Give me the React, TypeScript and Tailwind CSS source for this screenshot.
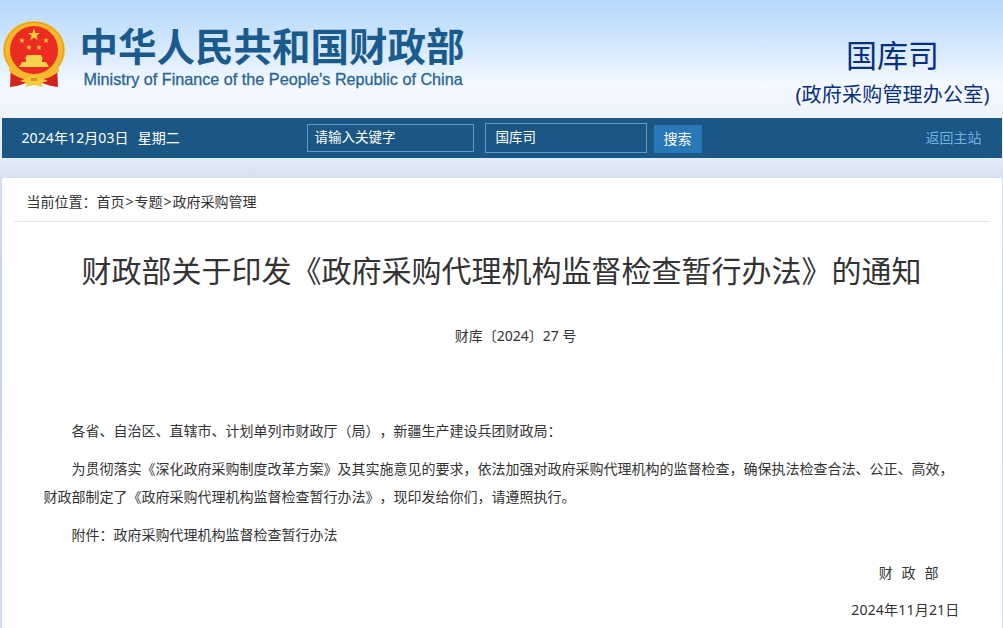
const FONT = "font-['Noto_Sans','Noto_Sans_CJK_SC',sans-serif]";

function Star({ x, y, r }: { x: number; y: number; r: number }) {
  const points = Array.from({ length: 10 }, (_, i) => {
    const a = (Math.PI / 5) * i - Math.PI / 2;
    const d = i % 2 === 0 ? r : r * 0.4;
    return `${(x + d * Math.cos(a)).toFixed(2)},${(y + d * Math.sin(a)).toFixed(2)}`;
  }).join(" ");
  return <polygon points={points} fill="#f8cf3a" />;
}

function Emblem() {
  return (
    <svg width="64" height="68" viewBox="0 0 64 68" className="block">
      <path d="M9 44 L8 66 L15 65 L24 62 L40 62 L49 65 L56 66 L55 44 Z" fill="#d2231c" />
      <ellipse cx="32" cy="29" rx="31" ry="29" fill="#f6b92b" />
      <ellipse cx="32" cy="29" rx="29.5" ry="27.5" fill="none" stroke="#e19a1a" strokeWidth="1" />
      <circle cx="32" cy="29" r="24" fill="#ec2c22" />
      <Star x={32} y={14} r={6.5} />
      <Star x={20} y={19.5} r={3} />
      <Star x={44} y={19.5} r={3} />
      <Star x={27} y={26.5} r={3} />
      <Star x={37} y={26.5} r={3} />
      <path d="M25 34 H39 L41 38 H23 Z M24 38 H40 V41 H24 Z M20 41 H44 L47 46 H17 Z" fill="#f7d24a" />
      <path d="M8 44 C15 52 24 54 32 54 C40 54 49 52 56 44 L57 50 C50 57 40 59 32 59 C24 59 14 57 7 50 Z" fill="#f6b92b" />
      <path d="M18 60 L27 56 L32 54 L37 56 L46 60 L39 62 L41 66 L32 64 L23 66 L25 62 Z" fill="#f7c93a" />
      <path d="M29 57 H35 V60 H29 Z" fill="#d98f1a" />
    </svg>
  );
}

export default function App() {
  return (
    <div className={`${FONT} relative h-[628px] overflow-hidden bg-[linear-gradient(180deg,#b6d8fb_0px,#d3e8fd_45px,#f3f9fe_85px,#eef4fb_118px,#e4ecf7_160px,#d5e0f1_178px,#c6d4e8_300px,#d3deee_628px)] [text-spacing-trim:space-all]`}>
      <div className="mx-auto w-[1000px]">
        <header className="flex h-[118px] justify-between">
          <div className="flex">
            <div className="pt-[21px]"><Emblem /></div>
            <div className="ml-[14px] pt-[21px]">
              <div className="h-[50px] text-[38.5px] font-bold leading-[50px] whitespace-nowrap text-[#1b5a8c]">中华人民共和国财政部</div>
              <div className="mt-[-1px] ml-[4px] font-['Liberation_Sans',sans-serif] text-[16.2px] leading-[18px] whitespace-nowrap text-[#2a6595] [-webkit-text-stroke:0.3px_#2a6595]">Ministry of Finance of the People's Republic of China</div>
            </div>
          </div>
          <div className="mr-[11px] flex w-[196px] flex-col items-center text-[#0b2f80]">
            <div className="mt-[34px] text-[31px] leading-[42px]">国库司</div>
            <div className="mt-[5px] text-[20px] leading-[28px] tracking-[0.2px] whitespace-nowrap">(政府采购管理办公室)</div>
          </div>
        </header>

        <nav className="flex h-10 items-center bg-[#1b5785] text-sm text-white">
          <div className="ml-5 flex w-[285px] gap-[9px] whitespace-nowrap">
            <span className="tracking-[0.1px]">2024年12月03日</span>
            <span>星期二</span>
          </div>
          <div className="flex h-7 w-[167px] items-center border border-[#5c9bcb] pl-[7px] text-[13.5px]">请输入关键字</div>
          <div className="ml-[11px] flex h-[30px] w-[162px] items-center border border-[#5c9bcb] pl-[10px] text-[13.5px]">国库司</div>
          <button className="ml-[7px] mt-px h-7 w-12 bg-[#2877b9] text-white">搜索</button>
          <a className="ml-auto mr-5 text-[#6fb1e2]">返回主站</a>
        </nav>

        <main className="mt-5 h-[450px] bg-white text-sm text-[#333]">
          <div className="mx-3 flex h-[44px] items-center border-b border-[#e5e5e5] pl-[13px] pt-[4px]">
            当前位置：首页<span className="px-px">&gt;</span>专题<span className="px-px">&gt;</span>政府采购管理
          </div>
          <h1 className="mt-[29px] text-center text-[30px] leading-[40px] font-normal">财政部关于印发《政府采购代理机构监督检查暂行办法》的通知</h1>
          <p className="mt-[33px] indent-[28px] text-center leading-[24px]">财库〔2024〕27 号</p>
          <div className="mt-[69px] px-[42px] leading-[28px]">
            <p className="indent-[28px]">各省、自治区、直辖市、计划单列市财政厅（局），新疆生产建设兵团财政局：</p>
            <p className="mt-[10px] indent-[28px]">为贯彻落实《深化政府采购制度改革方案》及其实施意见的要求，依法加强对政府采购代理机构的监督检查，确保执法检查合法、公正、高效，财政部制定了《政府采购代理机构监督检查暂行办法》，现印发给你们，请遵照执行。</p>
            <p className="mt-[10px] indent-[28px]">附件：政府采购代理机构监督检查暂行办法</p>
            <p className="mt-[10px] pr-[21px] text-right [word-spacing:0.8px]">财&nbsp;&nbsp;政&nbsp;&nbsp;部</p>
            <p className="mt-[9px] text-right tracking-[0.2px]">2024年11月21日</p>
          </div>
        </main>
      </div>
    </div>
  );
}
